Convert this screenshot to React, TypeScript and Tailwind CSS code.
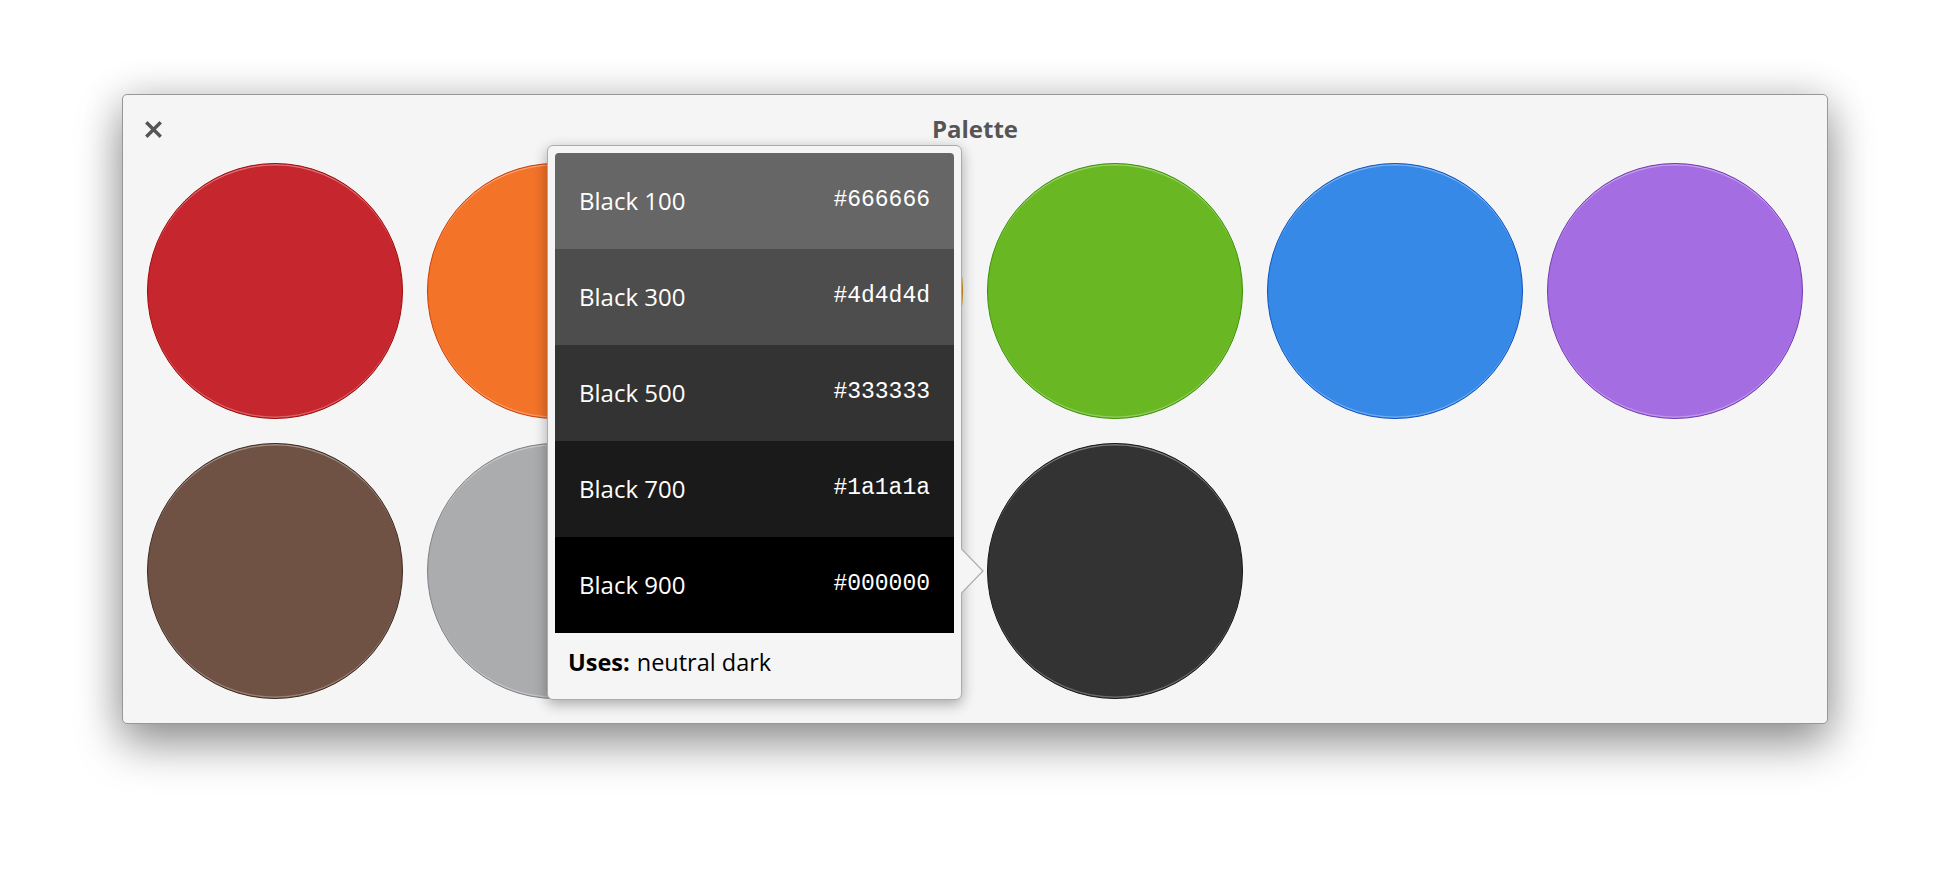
import React from "react";

type Swatch = { name: string; cls: string };

const row1: Swatch[] = [
  { name: "Strawberry", cls: "bg-[#c6262e] border-[#a10705]" },
  { name: "Orange", cls: "bg-[#f37329] border-[#cc3b02]" },
  { name: "Banana", cls: "bg-[#f9c440] border-[#d48e15]" },
  { name: "Lime", cls: "bg-[#68b723] border-[#3a9104]" },
  { name: "Blueberry", cls: "bg-[#3689e6] border-[#0d52bf]" },
  { name: "Grape", cls: "bg-[#a56de2] border-[#7239b3]" },
];

const row2: Swatch[] = [
  { name: "Cocoa", cls: "bg-[#6f5243] border-[#3d2820]" },
  { name: "Silver", cls: "bg-[#abacae] border-[#7e8087]" },
  { name: "Slate", cls: "bg-[#485a6c] border-[#273445]" },
  { name: "Black", cls: "bg-[#333333] border-[#151515]" },
];

const shades = [
  { label: "Black 100", hex: "#666666", cls: "bg-[#666666]" },
  { label: "Black 300", hex: "#4d4d4d", cls: "bg-[#4d4d4d]" },
  { label: "Black 500", hex: "#333333", cls: "bg-[#333333]" },
  { label: "Black 700", hex: "#1a1a1a", cls: "bg-[#1a1a1a]" },
  { label: "Black 900", hex: "#000000", cls: "bg-[#000000]" },
];

function Circle({ s }: { s: Swatch }) {
  return (
    <div
      title={s.name}
      className={
        "h-64 w-64 rounded-full border-[1.5px] shadow-[inset_0_2px_0_-0.5px_rgba(255,255,255,0.35),inset_0_-2px_0_-0.5px_rgba(255,255,255,0.28)] " +
        s.cls
      }
    />
  );
}

export default function App() {
  return (
    <div className="h-[874px] w-[1950px] overflow-hidden bg-white pl-[122px] pt-[94px] font-['Open_Sans',sans-serif]">
      <div className="relative w-[1706px] rounded-[5px] border border-[#979797] bg-[#f5f5f5] shadow-[0_20px_46px_rgba(0,0,0,0.4),0_0_40px_rgba(0,0,0,0.14)]">
        <div className="grid h-[68px] grid-cols-[1fr_auto_1fr] items-center">
          <div className="pl-[22px]">
            <svg width="17" height="17" viewBox="0 0 17 17">
              <path d="M2.5 2.5 L14.5 14.5 M14.5 2.5 L2.5 14.5" stroke="#555555" strokeWidth="3.4" strokeLinecap="square" fill="none" />
            </svg>
          </div>
          <div className="pb-[1px] text-[24px] font-bold leading-[32px] text-[#555555]">Palette</div>
          <div />
        </div>
        <div className="flex flex-col gap-6 px-6 pb-6">
          <div className="flex gap-6">
            {row1.map((s) => (
              <Circle key={s.name} s={s} />
            ))}
          </div>
          <div className="flex gap-6">
            {row2.map((s) => (
              <Circle key={s.name} s={s} />
            ))}
          </div>
        </div>

        <div className="absolute left-[424px] top-[50px] w-[415px] rounded-[6px] border border-[#ababab] bg-[#f5f5f5] px-[7px] pt-[7px] shadow-[0_4px_14px_rgba(0,0,0,0.32)]">
          <div className="overflow-hidden rounded-t-[4px]">
            {shades.map((r) => (
              <div key={r.label} className={"flex h-24 items-center justify-between px-6 text-white " + r.cls}>
                <span className="pb-[1px] text-[24px] leading-[32px]">{r.label}</span>
                <span className="pb-[2px] font-['Liberation_Mono',monospace] text-[23px] leading-[30px]">{r.hex}</span>
              </div>
            ))}
          </div>
          <div className="flex h-[66px] items-start pl-[13px] pt-[13px] text-[23.5px] leading-[32px] text-black">
            <span className="font-bold">Uses:</span>
            <span className="ml-[7px]">neutral dark</span>
          </div>
          <svg className="absolute left-full top-[402px]" width="23" height="46" viewBox="0 0 23 46">
            <path d="M0 0 L22 23 L0 46 Z" fill="#f5f5f5" />
            <path d="M0 0.5 L22 23 L0 45.5" fill="none" stroke="#ababab" strokeWidth="1.2" />
          </svg>
        </div>
      </div>
    </div>
  );
}
